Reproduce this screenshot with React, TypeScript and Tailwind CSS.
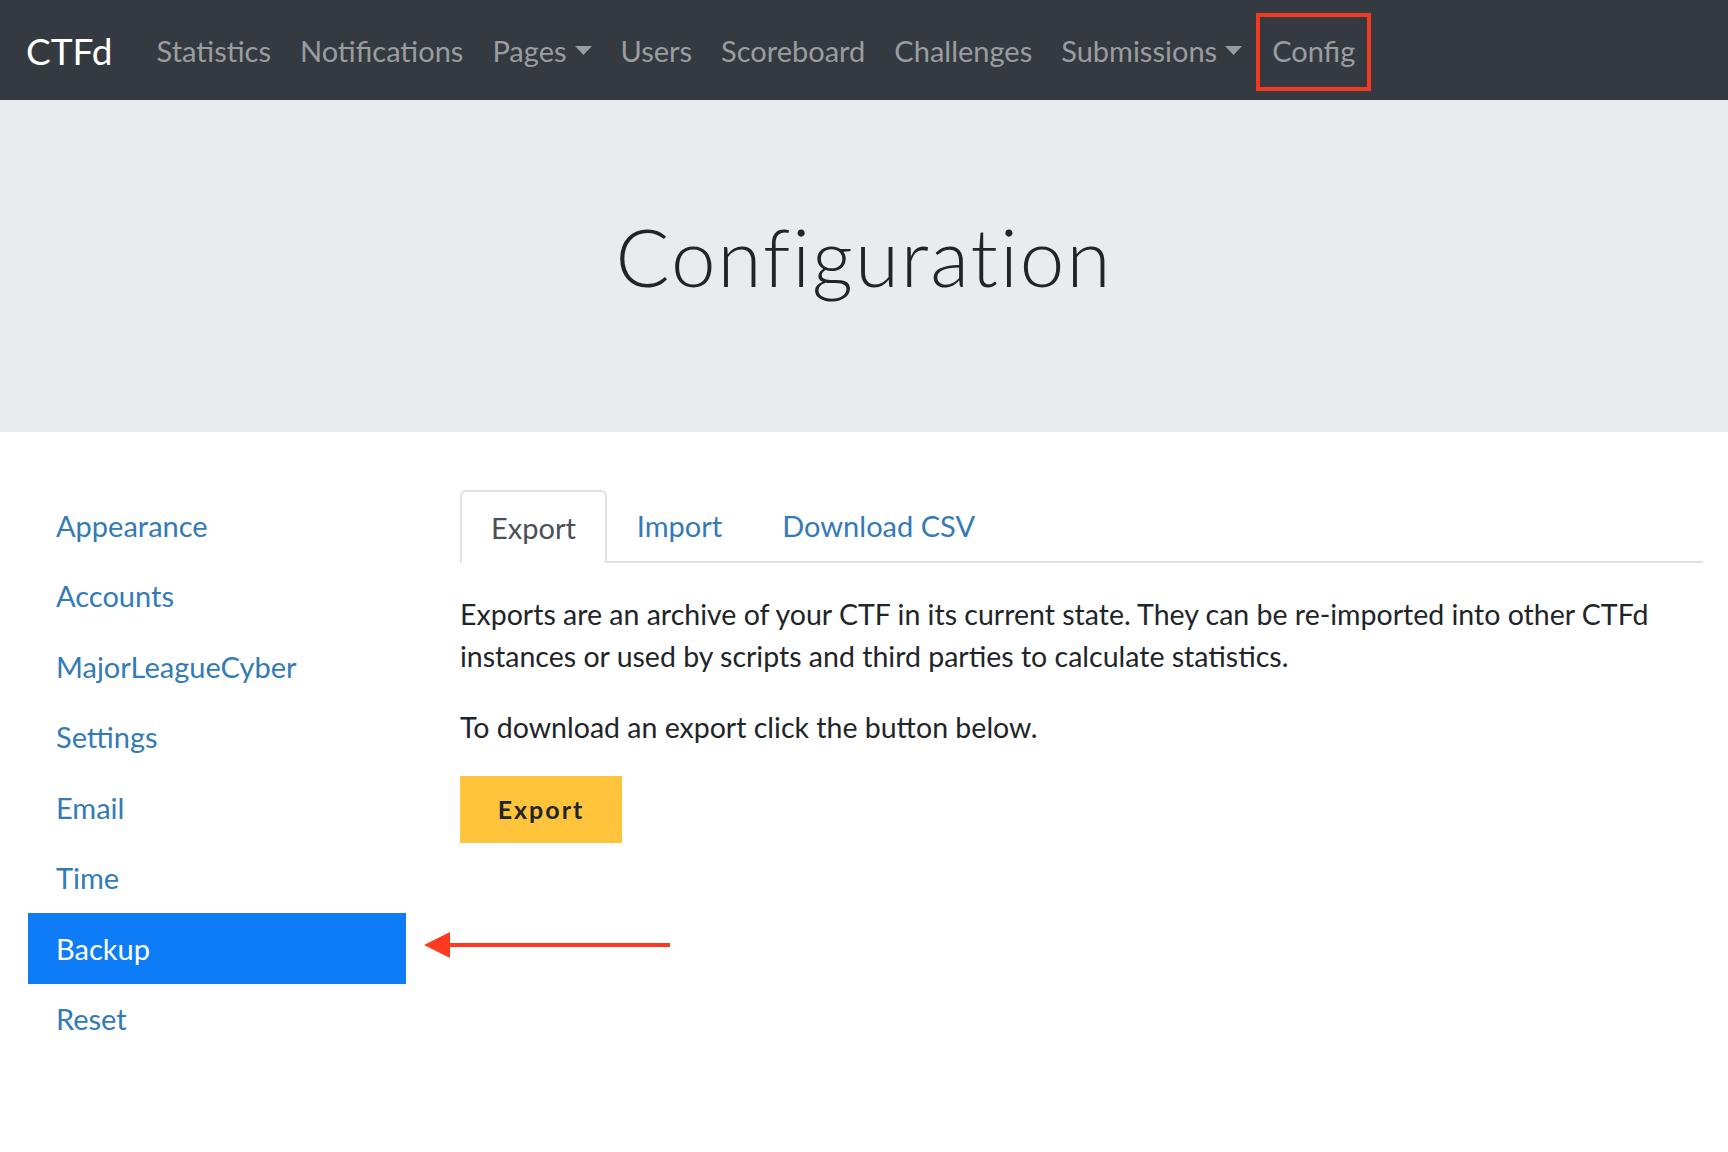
import React from "react";

const Caret = () => (
  <svg width="17" height="10" viewBox="0 0 17 10" className="ml-[8px] mt-[2px]">
    <polygon points="0,0 17,0 8.5,9" fill="currentColor" />
  </svg>
);

export default function App() {
  const navItems: { label: string; caret?: boolean; boxed?: boolean }[] = [
    { label: "Statistics" },
    { label: "Notifications" },
    { label: "Pages", caret: true },
    { label: "Users" },
    { label: "Scoreboard" },
    { label: "Challenges" },
    { label: "Submissions", caret: true },
    { label: "Config", boxed: true },
  ];
  const side = ["Appearance", "Accounts", "MajorLeagueCyber", "Settings", "Email", "Time", "Backup", "Reset"];
  return (
    <div className="min-h-[1152px] bg-white" style={{ fontFamily: "Lato, 'Noto Sans', sans-serif" }}>
      <nav className="h-[100px] bg-[#343a40] flex items-center pl-[26px]">
        <span className="text-white text-[37px] leading-none mr-[44px]">CTFd</span>
        <div className="flex items-center gap-[29px] text-[29px] text-[#9a9da0] leading-none">
          {navItems.map((n) => (
            <div
              key={n.label}
              className={
                n.boxed
                  ? "flex items-center h-[78px] mt-[4px] pb-[4px] px-[12px] -ml-[15px] border-[4px] border-[#f23a20]"
                  : "flex items-center"
              }
            >
              <span>{n.label}</span>
              {n.caret && <Caret />}
            </div>
          ))}
        </div>
      </nav>
      <header className="h-[332px] bg-[#e9ecef] flex items-center justify-center pb-[20px]">
        <h1 className="text-[80px] font-light text-[#212529] tracking-[2px] leading-none">Configuration</h1>
      </header>
      <main className="flex pt-[58px] pl-[28px] pr-[25px]">
        <aside className="w-[378px] shrink-0">
          {side.map((s) => (
            <div
              key={s}
              className={
                s === "Backup"
                  ? "h-[70.5px] flex items-center pl-[28px] text-[29px] bg-[#0e7cf6] text-white"
                  : "h-[70.5px] flex items-center pl-[28px] text-[29px] text-[#337ab7]"
              }
            >
              {s}
            </div>
          ))}
        </aside>
        <div className="relative w-[54px] shrink-0">
          <div className="absolute left-[18px] top-[441px] flex items-center">
            <svg width="246" height="28" viewBox="0 0 246 28">
              <polygon points="0,14 26,1 26,27" fill="#fb3a1f" />
              <rect x="24" y="12" width="222" height="4" fill="#fb3a1f" />
            </svg>
          </div>
        </div>
        <section className="flex-1 text-[#212529]">
          <div className="flex border-b-2 border-[#dee2e6] h-[73px]">
            <div className="px-[29px] flex items-center border-2 border-b-0 border-[#dee2e6] rounded-t-[6px] bg-white mb-[-2px] text-[29px] text-[#495057]">
              Export
            </div>
            <div className="px-[30px] flex items-center text-[29px] text-[#337ab7]">Import</div>
            <div className="px-[30px] flex items-center text-[29px] text-[#337ab7]">Download CSV</div>
          </div>
          <p className="mt-[30px] text-[28.5px] leading-[42px]">
            Exports are an archive of your CTF in its current state. They can be re-imported into other CTFd
            <br />
            instances or used by scripts and third parties to calculate statistics.
          </p>
          <p className="mt-[29px] text-[28.5px] leading-[42px]">To download an export click the button below.</p>
          <button className="mt-[28px] w-[162px] h-[67px] bg-[#ffc43b] text-[#212529] text-[25px] font-bold tracking-[2px]">
            Export
          </button>
        </section>
      </main>
    </div>
  );
}
